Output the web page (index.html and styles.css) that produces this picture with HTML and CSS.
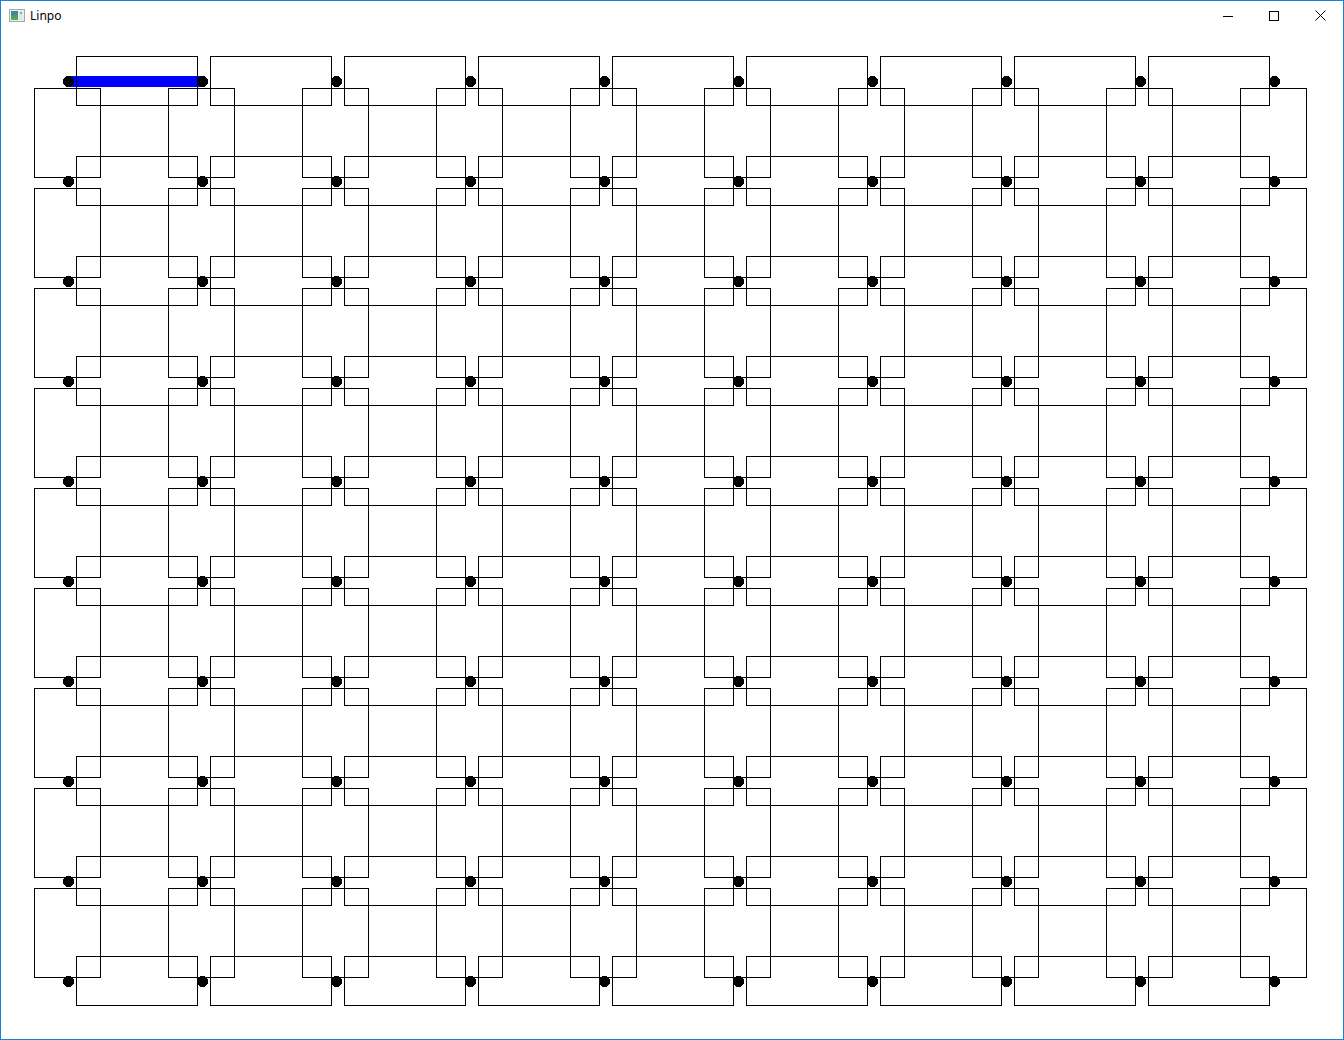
FILE: index.html
```html
<!DOCTYPE html>
<html>
<head>
<meta charset="utf-8">
<title>Linpo</title>
<link rel="stylesheet" href="styles.css">
</head>
<body>
<div class="window">
  <div class="titlebar">
    <div class="title">
      <svg class="app-icon" width="16" height="13" viewBox="0 0 16 13">
        <rect x="0.5" y="0.5" width="15" height="12" fill="#eeeeee" stroke="#a8a8a8"/>
        <defs>
          <linearGradient id="g1" x1="0" y1="0" x2="0" y2="1">
            <stop offset="0" stop-color="#3a7fb0"/>
            <stop offset="0.5" stop-color="#3f9a7a"/>
            <stop offset="1" stop-color="#5fae4a"/>
          </linearGradient>
        </defs>
        <rect x="2" y="2" width="7" height="9" fill="url(#g1)"/>
        <rect x="10" y="2" width="4" height="9" fill="#dfe6ea"/>
        <rect x="11" y="3" width="2" height="2" fill="#7fb96a"/>
      </svg>
      <span class="title-text">Linpo</span>
    </div>
    <div class="controls">
      <div class="btn">
        <svg width="10" height="10" viewBox="0 0 10 10"><line x1="0" y1="5.5" x2="10" y2="5.5" stroke="#000" stroke-width="1"/></svg>
      </div>
      <div class="btn">
        <svg width="10" height="10" viewBox="0 0 10 10"><rect x="0.5" y="0.5" width="9" height="9" fill="none" stroke="#000" stroke-width="1"/></svg>
      </div>
      <div class="btn">
        <svg width="11" height="11" viewBox="0 0 11 11"><path d="M0.5 0.5 L10.5 10.5 M10.5 0.5 L0.5 10.5" stroke="#000" stroke-width="1" fill="none"/></svg>
      </div>
    </div>
  </div>
  <svg class="canvas" width="1342" height="1008" viewBox="1 31 1342 1008">
    <defs>
      <rect id="h" width="121" height="49" fill="none" stroke="#000" stroke-width="1"/>
      <rect id="v" width="66" height="89" fill="none" stroke="#000" stroke-width="1"/>
      <ellipse id="d" rx="5.8" ry="5.4" fill="#000"/>
      <g id="hrow">
        <use href="#h" x="76.5" y="56.5"/>
        <use href="#h" x="210.5" y="56.5"/>
        <use href="#h" x="344.5" y="56.5"/>
        <use href="#h" x="478.5" y="56.5"/>
        <use href="#h" x="612.5" y="56.5"/>
        <use href="#h" x="746.5" y="56.5"/>
        <use href="#h" x="880.5" y="56.5"/>
        <use href="#h" x="1014.5" y="56.5"/>
        <use href="#h" x="1148.5" y="56.5"/>
      </g>
      <g id="vrow">
        <use href="#v" x="34.5" y="88.5"/>
        <use href="#v" x="168.5" y="88.5"/>
        <use href="#v" x="302.5" y="88.5"/>
        <use href="#v" x="436.5" y="88.5"/>
        <use href="#v" x="570.5" y="88.5"/>
        <use href="#v" x="704.5" y="88.5"/>
        <use href="#v" x="838.5" y="88.5"/>
        <use href="#v" x="972.5" y="88.5"/>
        <use href="#v" x="1106.5" y="88.5"/>
        <use href="#v" x="1240.5" y="88.5"/>
      </g>
      <g id="drow">
        <use href="#d" x="68.5" y="81.5"/>
        <use href="#d" x="202.5" y="81.5"/>
        <use href="#d" x="336.5" y="81.5"/>
        <use href="#d" x="470.5" y="81.5"/>
        <use href="#d" x="604.5" y="81.5"/>
        <use href="#d" x="738.5" y="81.5"/>
        <use href="#d" x="872.5" y="81.5"/>
        <use href="#d" x="1006.5" y="81.5"/>
        <use href="#d" x="1140.5" y="81.5"/>
        <use href="#d" x="1274.5" y="81.5"/>
      </g>
    </defs>
    <rect x="68" y="76" width="134" height="11" fill="#0000ff"/>
    <g class="rects">
      <use href="#hrow" y="0"/>
      <use href="#hrow" y="100"/>
      <use href="#hrow" y="200"/>
      <use href="#hrow" y="300"/>
      <use href="#hrow" y="400"/>
      <use href="#hrow" y="500"/>
      <use href="#hrow" y="600"/>
      <use href="#hrow" y="700"/>
      <use href="#hrow" y="800"/>
      <use href="#hrow" y="900"/>
      <use href="#vrow" y="0"/>
      <use href="#vrow" y="100"/>
      <use href="#vrow" y="200"/>
      <use href="#vrow" y="300"/>
      <use href="#vrow" y="400"/>
      <use href="#vrow" y="500"/>
      <use href="#vrow" y="600"/>
      <use href="#vrow" y="700"/>
      <use href="#vrow" y="800"/>
    </g>
    <g class="dots">
      <use href="#drow" y="0"/>
      <use href="#drow" y="100"/>
      <use href="#drow" y="200"/>
      <use href="#drow" y="300"/>
      <use href="#drow" y="400"/>
      <use href="#drow" y="500"/>
      <use href="#drow" y="600"/>
      <use href="#drow" y="700"/>
      <use href="#drow" y="800"/>
      <use href="#drow" y="900"/>
    </g>
  </svg>
</div>
</body>
</html>
```

FILE: styles.css
```css
html, body {
  margin: 0;
  padding: 0;
  background: #ffffff;
}

.window {
  width: 1344px;
  height: 1040px;
  box-sizing: border-box;
  border: 1px solid #1b80d5;
  background: #ffffff;
  display: flex;
  flex-direction: column;
  overflow: hidden;
}

.titlebar {
  height: 30px;
  flex: 0 0 30px;
  display: flex;
  align-items: stretch;
  justify-content: space-between;
  background: #ffffff;
}

.title {
  display: flex;
  align-items: center;
  padding-left: 8px;
  gap: 5px;
}

.app-icon {
  display: block;
  margin-top: -2px;
}

.title-text {
  font-family: "Noto Sans", "Open Sans", sans-serif;
  font-size: 12px;
  color: #000000;
  margin-top: -1px;
}

.controls {
  display: flex;
  align-items: stretch;
}

.btn {
  width: 46px;
  display: flex;
  align-items: center;
  justify-content: center;
  padding-bottom: 1px;
}

.btn svg {
  display: block;
}

.canvas {
  display: block;
  flex: 1 1 auto;
  background: #ffffff;
}

.rects {
  shape-rendering: crispEdges;
}

.dots {
  shape-rendering: crispEdges;
}
```
